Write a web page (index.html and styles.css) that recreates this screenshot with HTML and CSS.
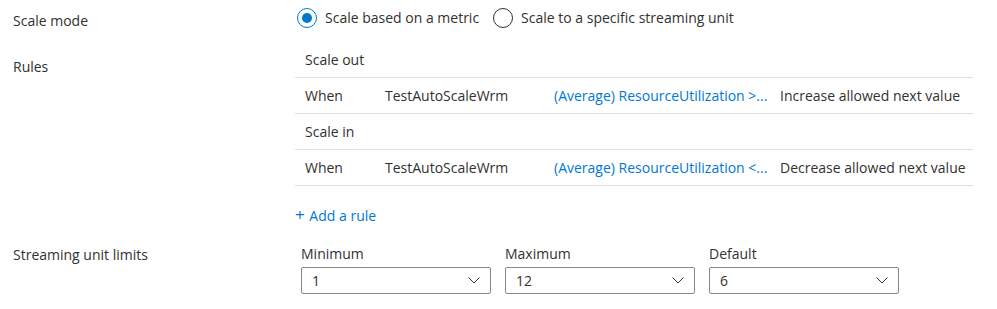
FILE: index.html
```html
<!DOCTYPE html>
<html lang="en">
<head>
  <meta charset="UTF-8" />
  <title>Scale settings</title>
  <link rel="stylesheet" href="styles.css">
</head>
<body>
  <div class="form">
    <div class="row row-mode">
      <div class="label">Scale mode</div>
      <div class="radios">
        <label class="radio checked"><span class="dot"></span>Scale based on a metric</label>
        <label class="radio"><span class="dot"></span>Scale to a specific streaming unit</label>
      </div>
    </div>

    <div class="row row-rules">
      <div class="label">Rules</div>
      <div>
        <div class="rules">
          <div class="rule-head">Scale out</div>
          <div class="rule">
            <span>When</span>
            <span>TestAutoScaleWrm</span>
            <a class="link">(Average) ResourceUtilization &gt;...</a>
            <span>Increase allowed next value</span>
          </div>
          <div class="rule-head">Scale in</div>
          <div class="rule">
            <span>When</span>
            <span>TestAutoScaleWrm</span>
            <a class="link">(Average) ResourceUtilization &lt;...</a>
            <span>Decrease allowed next value</span>
          </div>
        </div>
        <div class="add-rule"><span class="plus">+</span> Add a rule</div>
      </div>
    </div>

    <div class="row row-limits">
      <div class="label">Streaming unit limits</div>
      <div class="limits">
        <div class="field">
          <div class="field-label">Minimum</div>
          <div class="select"><span>1</span>
            <svg width="12" height="7" viewBox="0 0 12 7"><path d="M0.5 0.5 L6 6 L11.5 0.5" fill="none" stroke="#323130" stroke-width="1"/></svg>
          </div>
        </div>
        <div class="field">
          <div class="field-label">Maximum</div>
          <div class="select"><span>12</span>
            <svg width="12" height="7" viewBox="0 0 12 7"><path d="M0.5 0.5 L6 6 L11.5 0.5" fill="none" stroke="#323130" stroke-width="1"/></svg>
          </div>
        </div>
        <div class="field">
          <div class="field-label">Default</div>
          <div class="select"><span>6</span>
            <svg width="12" height="7" viewBox="0 0 12 7"><path d="M0.5 0.5 L6 6 L11.5 0.5" fill="none" stroke="#323130" stroke-width="1"/></svg>
          </div>
        </div>
      </div>
    </div>
  </div>
</body>
</html>
```

FILE: styles.css
```css
body {
  margin: 0;
  background: #fff;
  color: #323130;
  font-family: "Open Sans", "Segoe UI", sans-serif;
  font-size: 14px;
  line-height: 20px;
}
.row {
  display: grid;
  grid-template-columns: 295px 1fr;
}
.label {
  padding-left: 13px;
}
.row-mode {
  height: 42px;
}
.row-mode .label {
  padding-top: 11px;
}
.radios {
  display: flex;
  padding-top: 8px;
}
.radio {
  display: flex;
  align-items: center;
  height: 20px;
  margin-left: 2px;
  margin-right: 12px;
}
.dot {
  box-sizing: border-box;
  width: 20px;
  height: 20px;
  border: 1px solid #323130;
  border-radius: 50%;
  margin-right: 8px;
  position: relative;
}
.radio.checked .dot {
  border-color: #0078d4;
}
.radio.checked .dot::after {
  content: "";
  position: absolute;
  left: 4px;
  top: 4px;
  width: 10px;
  height: 10px;
  border-radius: 50%;
  background: #0078d4;
}
.row-rules .label {
  padding-top: 15px;
}
.rules {
  width: 678px;
}
.rule-head, .rule {
  height: 35px;
  display: flex;
  align-items: center;
  border-bottom: 1px solid #e1dfdd;
}
.rule-head {
  padding-left: 10px;
}
.rule {
  display: grid;
  grid-template-columns: 80px 169px 226px 1fr;
}
.rule > * {
  padding-left: 10px;
  white-space: nowrap;
  overflow: hidden;
}
.link {
  color: #0078d4;
}
.add-rule {
  color: #0078d4;
  padding: 19px 0 18px 0;
}
.plus {
  font-size: 17px;
  margin-right: 1px;
}
.row-limits .label {
  padding-top: 1px;
}
.limits {
  display: flex;
  gap: 14px;
  padding-left: 6px;
}
.field-label {
  height: 20px;
  margin-bottom: 3px;
}
.select {
  box-sizing: border-box;
  width: 190px;
  height: 27px;
  border: 1px solid #8a8886;
  border-radius: 2px;
  display: flex;
  align-items: center;
  justify-content: space-between;
  padding: 0 10px 0 10px;
}
```
